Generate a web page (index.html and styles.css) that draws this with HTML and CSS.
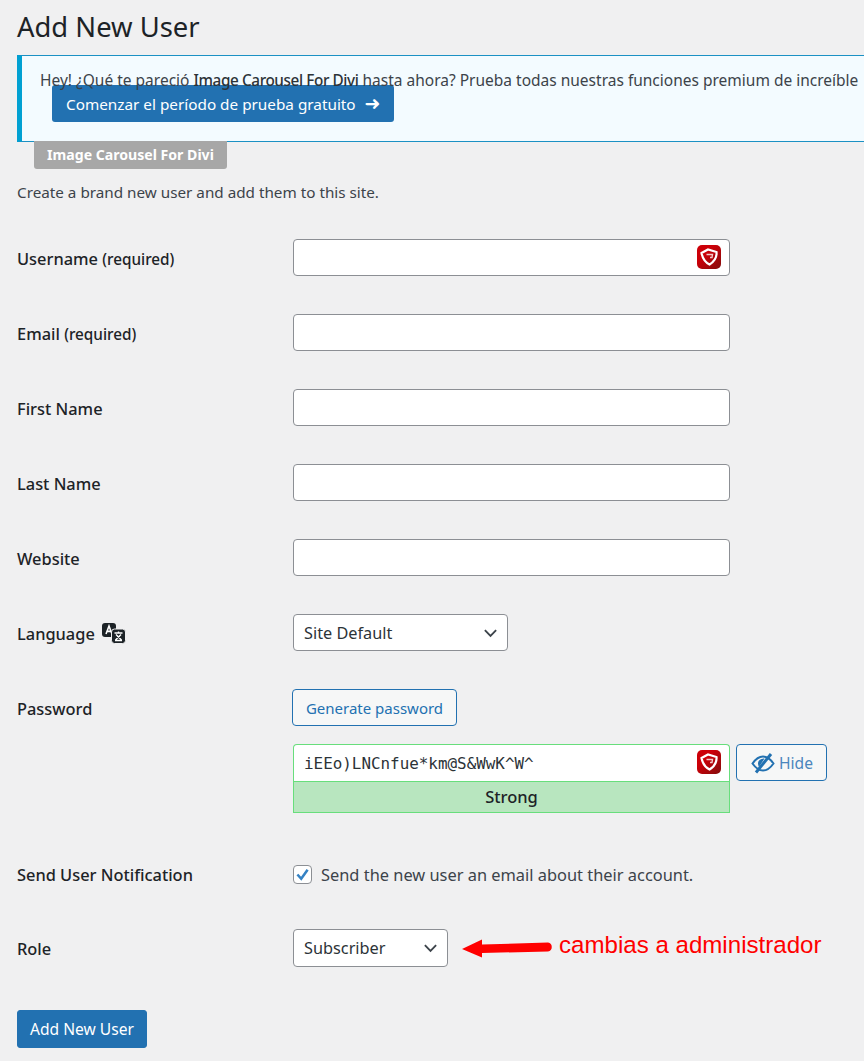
FILE: index.html
```html
<!DOCTYPE html>
<html lang="en">
<head>
    <meta charset="UTF-8">
    <meta name="viewport" content="width=device-width, initial-scale=1.0">
    <title>Add New User</title>
    <link rel="stylesheet" href="styles.css">
</head>
<body>
    <h1>Add New User</h1>

    <div class="notice">
        <p class="notice-text">Hey! ¿Qué te pareció <strong>Image Carousel For Divi</strong> hasta ahora? Prueba todas nuestras funciones premium de increíble</p>
        <a class="trial-btn" href="#">Comenzar el período de prueba gratuito <span class="trial-arrow">➜</span></a>
    </div>
    <div class="notice-tag">Image Carousel For Divi</div>

    <p class="intro">Create a brand new user and add them to this site.</p>

    <form class="user-form">
        <div class="form-row">
            <label>Username <span class="req">(required)</span></label>
            <div class="field">
                <input type="text" class="text-input">
                <svg class="shield" viewBox="0 0 24 24"><use href="#shield-icon"/></svg>
            </div>
        </div>
        <div class="form-row">
            <label>Email <span class="req">(required)</span></label>
            <div class="field"><input type="email" class="text-input"></div>
        </div>
        <div class="form-row">
            <label>First Name</label>
            <div class="field"><input type="text" class="text-input"></div>
        </div>
        <div class="form-row">
            <label>Last Name</label>
            <div class="field"><input type="text" class="text-input"></div>
        </div>
        <div class="form-row">
            <label>Website</label>
            <div class="field"><input type="text" class="text-input"></div>
        </div>
        <div class="form-row">
            <label class="lang-label">Language
                <svg class="lang-icon" viewBox="0 0 24 21">
                    <rect x="0" y="0" width="14" height="14" rx="3" fill="#1d2327"/>
                    <path d="M4 11 L7 3 L10 11 M5.2 8.4 H8.8" fill="none" stroke="#fff" stroke-width="1.6"/>
                    <rect x="9.5" y="6" width="14" height="14.5" rx="3" fill="#1d2327" stroke="#f0f0f1" stroke-width="1"/>
                    <path d="M12.5 10 H20.5 M16.5 8.5 V10 M13 17.5 H20 M14 11.5 L19.5 17 M19 11.5 L13.5 17" fill="none" stroke="#fff" stroke-width="1.4"/>
                </svg>
            </label>
            <select class="select-input lang-select"><option>Site Default</option></select>
        </div>

        <div class="form-row password-row">
            <label>Password</label>
            <div class="password-cell">
                <button type="button" class="btn-outline generate-btn">Generate password</button>
                <div class="password-line">
                    <div class="password-box">
                        <div class="field">
                            <input type="text" class="text-input password-input" value="iEEo)LNCnfue*km@S&amp;WwK^W^">
                            <svg class="shield" viewBox="0 0 24 24"><use href="#shield-icon"/></svg>
                        </div>
                        <div class="strength">Strong</div>
                    </div>
                    <button type="button" class="btn-outline hide-btn">
                        <svg class="eye-icon" viewBox="0 0 24 22">
                            <path d="M1.5 11.5 C5 6.5 8.5 4.5 12 4.5 C15.5 4.5 19 6.5 22.5 11.5 C19 16.5 15.5 18.5 12 18.5 C8.5 18.5 5 16.5 1.5 11.5 Z" fill="none" stroke="#2271b1" stroke-width="2"/>
                            <path d="M7 11.5 C7 8.5 9.5 6.5 13.5 6.5 L8 15 C7.4 14 7 12.8 7 11.5 Z" fill="#2271b1"/>
                            <path d="M5 20.5 L20 2" fill="none" stroke="#2271b1" stroke-width="3"/>
                        </svg>
                        Hide
                    </button>
                </div>
            </div>
        </div>

        <div class="form-row notify-row">
            <label>Send User Notification</label>
            <label class="check-label"><input type="checkbox" class="check-input" checked> Send the new user an email about their account.</label>
        </div>

        <div class="form-row role-row">
            <label>Role</label>
            <div class="role-cell">
                <select class="select-input role-select"><option>Subscriber</option></select>
                <svg class="red-arrow" viewBox="0 0 92 20">
                    <path d="M1 11 L21 1.5 L21 6.5 L87 4.5 C92 4.5 92 13.5 87 13.5 L21 15 L21 19.5 Z" fill="#ff0000"/>
                </svg>
                <span class="annotation">cambias a administrador</span>
            </div>
        </div>

        <button type="submit" class="btn-primary">Add New User</button>
    </form>

    <svg class="svg-defs" width="0" height="0">
        <defs>
            <linearGradient id="shield-bg" x1="0" y1="0" x2="1" y2="1">
                <stop offset="0.35" stop-color="#cc0008"/>
                <stop offset="1" stop-color="#830d0d"/>
            </linearGradient>
            <g id="shield-icon">
                <rect width="24" height="24" rx="5" fill="url(#shield-bg)"/>
                <path d="M4.5 8 L11 4.5 L19.5 7 C20 12.5 16.5 17 12.5 19.5 C8.5 17.5 5.5 13 4.5 8 Z" fill="none" stroke="#fff" stroke-width="2.2"/>
                <path d="M9.5 9.5 L15.5 9.5 L15 12.5 L13 12.5" fill="none" stroke="#f3c9c9" stroke-width="1.4"/>
            </g>
        </defs>
    </svg>
</body>
</html>
```

FILE: styles.css
```css
html, body {
    height: 100%;
    overflow: hidden;
}

body {
    font-family: 'Noto Sans', 'Open Sans', sans-serif;
    font-size: 15.25px;
    margin: 0;
    padding: 0 0 0 17px;
    background-color: #f0f0f1;
    color: #3c434a;
}

h1 {
    font-size: 27.4px;
    font-weight: 400;
    line-height: 36px;
    margin: 9px 0 10px;
    color: #1d2327;
}

.notice {
    box-sizing: border-box;
    height: 87px;
    padding: 14px 0 0 18px;
    background-color: #f3fbff;
    border: 1px solid #1b91c4;
    border-left: 5px solid #00a0d2;
    border-right: none;
}

.notice-text {
    margin: 0;
    height: 15px;
    font-size: 15.5px;
    line-height: 20px;
    white-space: nowrap;
    color: #3c434a;
}

.notice-text strong {
    font-size: 15.3px;
    font-weight: 500;
    letter-spacing: -0.4px;
    color: #2c3338;
}

.trial-btn {
    display: flex;
    align-items: center;
    gap: 9px;
    box-sizing: border-box;
    width: 342px;
    height: 37px;
    margin-left: 12px;
    padding: 0 0 0 14px;
    background-color: #2271b1;
    border-radius: 3px;
    color: #fff;
    font-size: 15.3px;
    text-decoration: none;
    white-space: nowrap;
}

.trial-arrow {
    font-family: 'DejaVu Sans', sans-serif;
    font-size: 19px;
    line-height: 1;
}

.notice-tag {
    display: inline-block;
    box-sizing: border-box;
    width: 193px;
    height: 28px;
    line-height: 28px;
    margin: -1px 0 0 17px;
    background-color: #a7a7a7;
    border-radius: 0 0 3px 3px;
    color: #fff;
    font-size: 14.1px;
    font-weight: 700;
    text-align: center;
    vertical-align: top;
}

.intro {
    margin: 12px 0 36px;
    line-height: 22px;
}

.form-row {
    display: grid;
    grid-template-columns: 276px 1fr;
    align-items: center;
    min-height: 37px;
    margin-bottom: 38px;
}

.form-row > label:first-child {
    padding-top: 2px;
    color: #1d2327;
    font-size: 16.4px;
    font-weight: 500;
}

.req {
    font-size: 15.3px;
}

.lang-label {
    display: flex;
    align-items: center;
    gap: 7px;
}

.lang-icon {
    width: 24px;
    height: 21px;
}

.field {
    position: relative;
    width: 437px;
}

.text-input {
    display: block;
    box-sizing: border-box;
    width: 100%;
    height: 37px;
    margin: 0;
    padding: 0 10px;
    background-color: #fff;
    border: 1px solid #8c8f94;
    border-radius: 4px;
    outline: none;
}

.shield {
    position: absolute;
    top: 6px;
    right: 9px;
    width: 24px;
    height: 24px;
}

.select-input {
    appearance: none;
    box-sizing: border-box;
    height: 37px;
    padding: 0 10px;
    background: #fff url("data:image/svg+xml,%3Csvg xmlns='http://www.w3.org/2000/svg' viewBox='0 0 16 10'%3E%3Cpath d='M2 2 L8 8 L14 2' fill='none' stroke='%233c434a' stroke-width='2'/%3E%3C/svg%3E") no-repeat right 9px center / 15px 10px;
    border: 1px solid #8c8f94;
    border-radius: 4px;
    color: #2c3338;
    font-family: inherit;
    font-size: 16.3px;
}

.lang-select {
    width: 215px;
}

.password-row {
    align-items: start;
    margin-bottom: 43px;
}

.password-row > label:first-child {
    line-height: 36px;
}

.password-cell {
    display: flex;
    flex-direction: column;
    gap: 18px;
}

.password-line {
    display: flex;
    gap: 6px;
    align-items: flex-start;
}

.password-box {
    width: 437px;
}

.password-input {
    border-color: #68de7c;
    border-bottom: none;
    border-radius: 4px 4px 0 0;
    color: #2c3338;
    font-family: 'DejaVu Sans Mono', 'Liberation Mono', monospace;
    font-size: 15.9px;
    padding: 0 10px;
}

.strength {
    box-sizing: border-box;
    height: 32px;
    line-height: 30px;
    background-color: #b8e6bf;
    border: 1px solid #68de7c;
    color: #1d2327;
    font-size: 16.5px;
    font-weight: 500;
    text-align: center;
}

.btn-outline {
    box-sizing: border-box;
    height: 37px;
    background-color: #f6f7f7;
    border: 1px solid #2271b1;
    border-radius: 4px;
    color: #2271b1;
    font-family: inherit;
    font-size: 15px;
}

.generate-btn {
    width: 165px;
    margin-left: -1px;
    padding: 0;
}

.hide-btn {
    display: flex;
    align-items: center;
    gap: 4px;
    width: 91px;
    padding: 0 0 0 14px;
    color: #4a86bd;
    font-size: 15.6px;
}

.eye-icon {
    width: 24px;
    height: 22px;
}

.notify-row {
    margin-bottom: 36px;
}

.form-row.notify-row > label:first-child,
.form-row.role-row > label:first-child {
    padding-top: 0;
}

.check-label {
    display: flex;
    align-items: center;
    gap: 9px;
    font-size: 16.4px;
}

.check-input {
    appearance: none;
    box-sizing: border-box;
    width: 19px;
    height: 19px;
    margin: 0;
    background: #fff url("data:image/svg+xml,%3Csvg xmlns='http://www.w3.org/2000/svg' viewBox='0 0 20 20'%3E%3Cpath d='M4 10 L8.5 15 L16 4.5' fill='none' stroke='%233582c4' stroke-width='3'/%3E%3C/svg%3E") no-repeat center / 17px 17px;
    border: 1px solid #8c8f94;
    border-radius: 4px;
}

.role-row {
    margin-bottom: 43px;
}

.role-cell {
    display: flex;
    align-items: center;
}

.role-select {
    width: 155px;
    height: 38px;
}

.red-arrow {
    width: 92px;
    height: 20px;
    margin-left: 13px;
}

.annotation {
    margin: 0 0 6px 6px;
    color: #ff0000;
    font-family: 'Liberation Sans', Arial, sans-serif;
    font-size: 24.1px;
    white-space: nowrap;
}

.btn-primary {
    box-sizing: border-box;
    width: 130px;
    height: 38px;
    padding: 0;
    background-color: #2271b1;
    border: 1px solid #2271b1;
    border-radius: 3px;
    color: #fff;
    font-family: inherit;
    font-size: 15.6px;
}

.svg-defs {
    position: absolute;
}
```
